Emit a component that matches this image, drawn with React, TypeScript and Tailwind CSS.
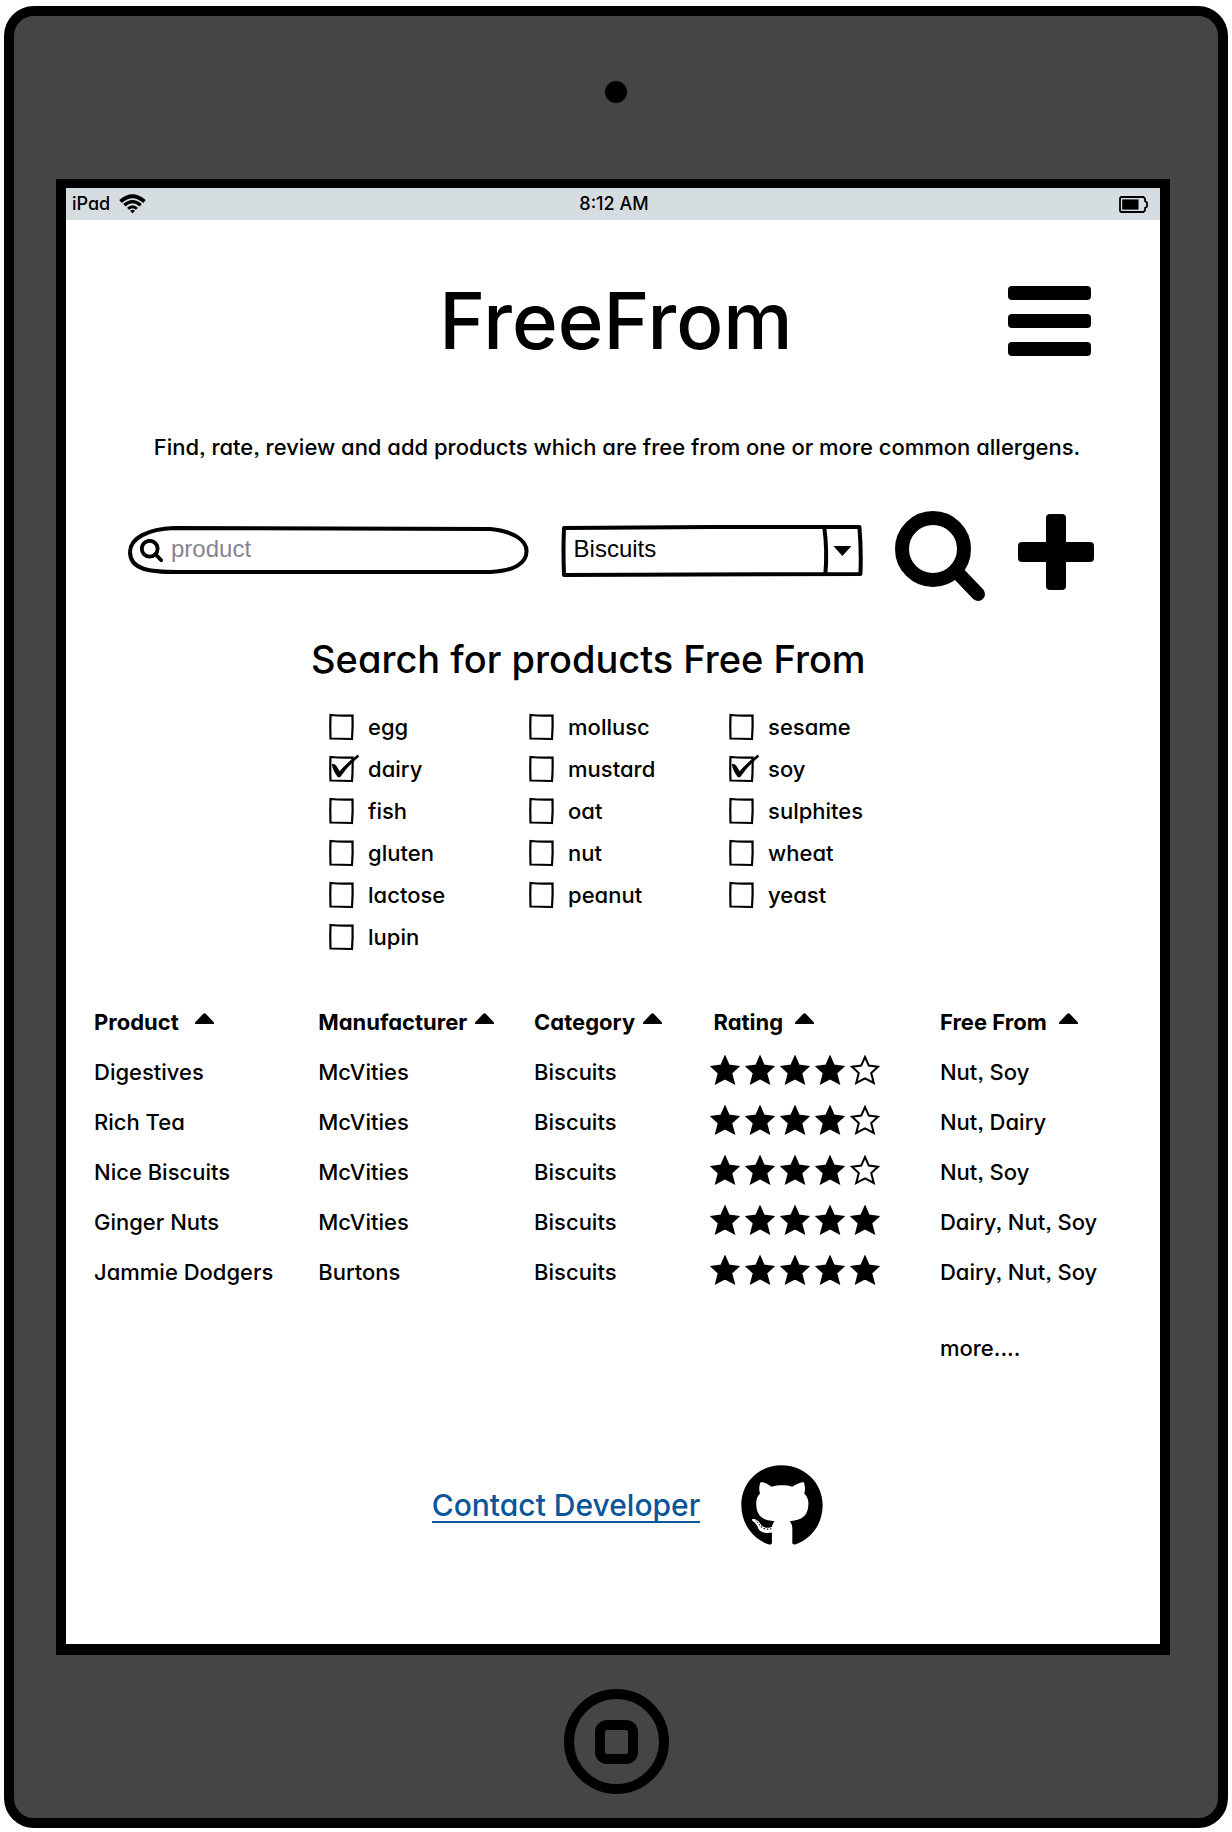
import { useState } from "react";
import { FaGithub } from "react-icons/fa";

const ALLERGENS: string[][] = [
  ["egg", "dairy", "fish", "gluten", "lactose", "lupin"],
  ["mollusc", "mustard", "oat", "nut", "peanut"],
  ["sesame", "soy", "sulphites", "wheat", "yeast"],
];

const COLUMNS = [
  { label: "Product", width: "w-[21.6%]", pad: "", gap: "gap-4" },
  { label: "Manufacturer", width: "w-[20.8%]", pad: "", gap: "gap-2" },
  { label: "Category", width: "w-[16.9%]", pad: "", gap: "gap-2" },
  { label: "Rating", width: "w-[22.2%]", pad: "pl-1", gap: "gap-3" },
  { label: "Free From", width: "w-[18.5%]", pad: "", gap: "gap-3" },
];

const PRODUCTS = [
  { name: "Digestives", maker: "McVities", category: "Biscuits", rating: 4, freeFrom: "Nut, Soy" },
  { name: "Rich Tea", maker: "McVities", category: "Biscuits", rating: 4, freeFrom: "Nut, Dairy" },
  { name: "Nice Biscuits", maker: "McVities", category: "Biscuits", rating: 4, freeFrom: "Nut, Soy" },
  { name: "Ginger Nuts", maker: "McVities", category: "Biscuits", rating: 5, freeFrom: "Dairy, Nut, Soy" },
  { name: "Jammie Dodgers", maker: "Burtons", category: "Biscuits", rating: 5, freeFrom: "Dairy, Nut, Soy" },
];

function WifiIcon() {
  return (
    <svg width="27" height="20" viewBox="0 0 27 20" fill="none" stroke="black" aria-hidden="true">
      <path d="M1.5 7.5Q13.5 -3 25.5 7.5" strokeWidth="3.8" />
      <path d="M5.3 11.3Q13.5 4 21.7 11.3" strokeWidth="3.2" />
      <path d="M9 14.8Q13.5 10.6 18 14.8" strokeWidth="2.8" />
      <path d="M11 16.6Q13.5 14.8 16 16.6L13.5 19.4Z" fill="black" stroke="none" />
    </svg>
  );
}

function BatteryIcon() {
  return (
    <svg width="29" height="17" viewBox="0 0 29 17" fill="none" aria-label="Battery" role="img">
      <path d="M2 1H24.5L26 2.5V5L28 6.5V10.5L26 12V14.5L24.5 16H2L1 15V2Z" stroke="black" strokeWidth="1.8" />
      <rect x="3.2" y="3.4" width="16.3" height="10.2" fill="black" />
    </svg>
  );
}

function Magnifier({ size, ring }: { size: number; ring: number }) {
  return (
    <svg width={size} height={size} viewBox="0 0 90 90" fill="none" stroke="black" aria-hidden="true">
      <circle cx="38" cy="38" r="31" strokeWidth={ring} />
      <path d="M61 60L83 83" strokeWidth={ring} strokeLinecap="round" />
    </svg>
  );
}

function Star({ filled }: { filled: boolean }) {
  return (
    <svg width="30" height="30" viewBox="0 0 30 30" aria-hidden="true">
      <path
        d="M15 2L18.8 10.6L28 11.8L21.2 18L23.8 28L15 23.3L6.2 28L8.8 18L2 11.8L11.2 10.6Z"
        fill={filled ? "black" : "white"}
        stroke="black"
        strokeWidth="2"
      />
    </svg>
  );
}

function Allergen({ name, initial }: { name: string; initial: boolean }) {
  const [on, setOn] = useState(initial);
  return (
    <label className="flex h-[42px] items-center gap-[14px] text-[22px]">
      <span className="relative block h-[26px] w-[25px]">
        <input
          type="checkbox"
          checked={on}
          onChange={() => setOn(!on)}
          className="block h-full w-full appearance-none"
        />
        <svg
          className="pointer-events-none absolute left-0 top-0 overflow-visible"
          width="25"
          height="26"
          viewBox="0 0 25 26"
          fill="none"
          stroke="black"
          aria-hidden="true"
        >
          <path d="M1.5 1Q12 2 23.5 1.5Q24 13 23 25Q12 24.5 1.5 24.5Q1 12 1.5 1Z" strokeWidth="2.2" />
          {on && (
            <path
              d="M3 8L6.5 9L10.5 15.500Q19 6 28.500 -1L30 .5Q18 10 11 21H9Q4 15 3 8Z"
              fill="black"
              strokeWidth="0.6"
            />
          )}
        </svg>
      </span>
      {name}
    </label>
  );
}

export default function App() {
  return (
    <div className="bg-white px-1 pt-[6px] pb-1 font-['Inter','Liberation_Sans',sans-serif] font-medium text-black [font-feature-settings:'cv11','ss03']">
      <div className="rounded-[30px] border-[10px] border-black bg-[#454545] pr-12 pl-[42px]">
        <div className="flex h-[163px] justify-center pt-[65px] pl-[6px]">
          <div className="size-[22px] rounded-full bg-black" />
        </div>

        <div className="border-x-[10px] border-t-[9px] border-b-[11px] border-black bg-white">
          <div className="grid h-8 grid-cols-3 items-center bg-[#d6dde0] pr-3 pl-[6px] text-[18px] leading-7">
            <div className="flex items-center gap-[9px]">
              iPad <WifiIcon />
            </div>
            <div className="pl-2 text-center">8:12 AM</div>
            <div className="flex justify-end">
              <BatteryIcon />
            </div>
          </div>

          <header className="grid grid-cols-[1fr_auto_1fr] items-center pt-[61px] pr-[69px] pl-[75px]">
            <h1 className="col-start-2 text-[78px] leading-20">FreeFrom</h1>
            <button type="button" aria-label="Menu" className="flex flex-col gap-[14px] justify-self-end">
              <span className="h-[14px] w-[83px] rounded-[4px] bg-black" />
              <span className="h-[14px] w-[83px] rounded-[4px] bg-black" />
              <span className="h-[14px] w-[83px] rounded-[4px] bg-black" />
            </button>
          </header>

          <p className="mt-[70px] pl-2 text-center text-[22px] leading-8">
            Find, rate, review and add products which are free from one or more common allergens.
          </p>

          <form
            className="mt-12 grid grid-cols-[400fr_300fr_90px_76px] items-start gap-[33px] pr-[66px] pl-[62px]"
            onSubmit={(e) => e.preventDefault()}
          >
            <div className="relative mt-[15px] flex h-12 items-center gap-2 pr-6 pl-3">
              <svg
                className="pointer-events-none absolute inset-0 h-full w-full overflow-visible"
                viewBox="0 0 400 48"
                preserveAspectRatio="none"
                fill="none"
                stroke="black"
                strokeWidth="4"
                aria-hidden="true"
              >
                <path d="M46 2L362 3C384 5 398 14 398 25C398 37 386 45 362 46L50 46C22 46 2 44 2 26C2 12 20 3 46 2Z" />
              </svg>
              <Magnifier size={23} ring={15} />
              <input
                type="search"
                aria-label="Product"
                placeholder="product"
                className="min-w-0 flex-1 bg-transparent pb-0.5 font-['Liberation_Sans',sans-serif] text-[24px] leading-8 font-normal outline-none placeholder:text-[#858490]"
              />
            </div>

            <div className="relative mt-[14px] h-[52px]">
              <svg
                className="pointer-events-none absolute inset-0 h-full w-full overflow-visible"
                viewBox="0 0 300 52"
                preserveAspectRatio="none"
                fill="none"
                stroke="black"
                strokeWidth="4"
                strokeLinejoin="round"
                aria-hidden="true"
              >
                <path d="M2 3L150 2L297 2Q299 26 298 49L2 50Q1 26 2 3Z" />
                <path d="M262 3Q265 26 263 49" />
                <path d="M271 21H289L280 31Z" fill="black" stroke="none" />
              </svg>
              <select
                aria-label="Category"
                className="h-full w-full appearance-none bg-transparent pb-[4px] pl-3 font-['Liberation_Sans',sans-serif] text-[24px] font-normal outline-none"
              >
                <option>Biscuits</option>
              </select>
            </div>

            <button type="submit" aria-label="Search">
              <Magnifier size={90} ring={14} />
            </button>

            <button type="button" aria-label="Add product" className="mt-[3px]">
              <svg width="76" height="76" viewBox="0 0 76 76" aria-hidden="true">
                <rect x="28" y="0" width="20" height="76" rx="4" />
                <rect x="0" y="28" width="76" height="20" rx="4" />
              </svg>
            </button>
          </form>

          <fieldset className="mt-[38px] ml-[22.4%]">
            <legend className="text-[38px] leading-10">Search for products Free From</legend>
            <div className="mt-[27px] ml-[18px] grid w-[600px] grid-cols-3">
              {ALLERGENS.map((group) => (
                <div key={group[0]}>
                  {group.map((name) => (
                    <Allergen key={name} name={name} initial={name === "dairy" || name === "soy"} />
                  ))}
                </div>
              ))}
            </div>
          </fieldset>

          <div className="mt-[39px] px-7">
            <table className="w-full table-fixed text-left text-[22px] whitespace-nowrap">
              <thead>
                <tr className="h-[50px]">
                  {COLUMNS.map((c) => (
                    <th key={c.label} className={`${c.width} ${c.pad} font-bold`}>
                      <button type="button" className={`flex items-center ${c.gap}`}>
                        {c.label}
                        <svg className="mb-2" width="19" height="11" viewBox="0 0 19 11" aria-hidden="true">
                          <path d="M0 11V9.500L8 1Q9.500 -.5 11 1L19 9.500V11Z" />
                        </svg>
                      </button>
                    </th>
                  ))}
                </tr>
              </thead>
              <tbody>
                {PRODUCTS.map((p) => (
                  <tr key={p.name} className="h-[50px]">
                    <td>{p.name}</td>
                    <td>{p.maker}</td>
                    <td>{p.category}</td>
                    <td>
                      <div className="flex gap-[5px] pb-1" role="img" aria-label={`${p.rating} out of 5`}>
                        {[1, 2, 3, 4, 5].map((n) => (
                          <Star key={n} filled={n <= p.rating} />
                        ))}
                      </div>
                    </td>
                    <td>{p.freeFrom}</td>
                  </tr>
                ))}
              </tbody>
              <tfoot>
                <tr className="h-[77px]">
                  <td colSpan={4} />
                  <td className="pt-[26px]">more....</td>
                </tr>
              </tfoot>
            </table>
          </div>

          <footer className="mt-[90px] flex items-center justify-center gap-10 pb-[96px] pl-[30px]">
            <a
              href="#contact"
              className="border-b-2 border-[#0b5599] text-[30px] leading-8 text-[#0b5599]"
            >
              Contact Developer
            </a>
            <a href="#github" aria-label="GitHub">
              <FaGithub className="size-[84px]" />
            </a>
          </footer>
        </div>

        <div className="flex h-[163px] justify-center pt-[34px] pl-[6px]">
          <button
            type="button"
            aria-label="Home"
            className="flex size-[105px] items-center justify-center rounded-full border-[10px] border-black"
          >
            <span className="h-[44px] w-[43px] rounded-[12px] border-[10px] border-black" />
          </button>
        </div>
      </div>
    </div>
  );
}
